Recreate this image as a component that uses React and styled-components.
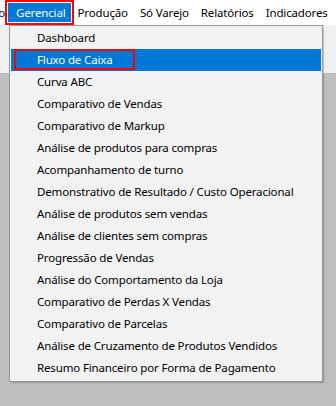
import React from 'react'
import styled, { createGlobalStyle, css } from 'styled-components'

const Global = createGlobalStyle`
  html, body { margin: 0; padding: 0; }
  body {
    width: 336px;
    height: 406px;
    overflow: hidden;
    font-family: "Noto Sans", "Open Sans", sans-serif;
    font-size: 11.5px;
    letter-spacing: -0.15px;
    color: #000;
    background: #bdbdbd;
  }
`

const Window = styled.div`
  position: relative;
  width: 336px;
  height: 406px;
  display: flex;
  flex-direction: column;
  background: #bdbdbd;
`

const MenuBar = styled.div`
  height: 25px;
  display: flex;
  align-items: center;
  background: #fff;
  overflow: hidden;
  white-space: nowrap;
`

const BarItem = styled.div`
  height: 19px;
  line-height: 19px;
  padding: 0 6px;
  flex: 0 0 auto;
  ${p => p.$clipped && css`
    width: 5px;
    padding: 0;
    display: flex;
    justify-content: flex-end;
    overflow: hidden;
  `}
  ${p => p.$active && css`
    margin: 0 1px 0 3px;
    padding: 0 5px 0 8px;
    background: #0078d7;
    color: #fff;
    outline: 2px solid #ff0000;
    outline-offset: 1px;
  `}
`

const Toolbar = styled.div`
  height: 48px;
  background: #f0f0f0;
`

const Dropdown = styled.div`
  position: absolute;
  left: 9px;
  top: 25px;
  width: 310px;
  padding: 1px 1px 2px;
  background: #f2f2f2;
  border: 1px solid #979797;
  box-shadow: 2px 2px 1px -1px rgba(0, 0, 0, 0.18);
`

const Item = styled.div`
  height: 22px;
  line-height: 22px;
  padding-left: 26px;
  white-space: nowrap;
  ${p => p.$selected && css`
    background: #0078d7;
    color: #fff;
  `}
`

const Marked = styled.span`
  display: inline-block;
  margin-left: -23px;
  padding: 0 20px 0 21px;
  height: 17px;
  line-height: 17px;
  border: 2px solid #ff0000;
  vertical-align: top;
`

const bar = ['Movimento', 'Gerencial', 'Produção', 'Só Varejo', 'Relatórios', 'Indicadores']

const items = [
  'Dashboard',
  'Fluxo de Caixa',
  'Curva ABC',
  'Comparativo de Vendas',
  'Comparativo de Markup',
  'Análise de produtos para compras',
  'Acompanhamento de turno',
  'Demonstrativo de Resultado / Custo Operacional',
  'Análise de produtos sem vendas',
  'Análise de clientes sem compras',
  'Progressão de Vendas',
  'Análise do Comportamento da Loja',
  'Comparativo de Perdas X Vendas',
  'Comparativo de Parcelas',
  'Análise de Cruzamento de Produtos Vendidos',
  'Resumo Financeiro por Forma de Pagamento',
]

export default function App() {
  return (
    <Window>
      <Global />
      <MenuBar>
        {bar.map((b, i) => (
          <BarItem key={b} $clipped={i === 0} $active={b === 'Gerencial'}>
            {i === 0 ? <span>{b}</span> : b}
          </BarItem>
        ))}
      </MenuBar>
      <Toolbar />
      <Dropdown>
        {items.map(t => (
          <Item key={t} $selected={t === 'Fluxo de Caixa'}>
            {t === 'Fluxo de Caixa' ? <Marked>{t}</Marked> : t}
          </Item>
        ))}
      </Dropdown>
    </Window>
  )
}
